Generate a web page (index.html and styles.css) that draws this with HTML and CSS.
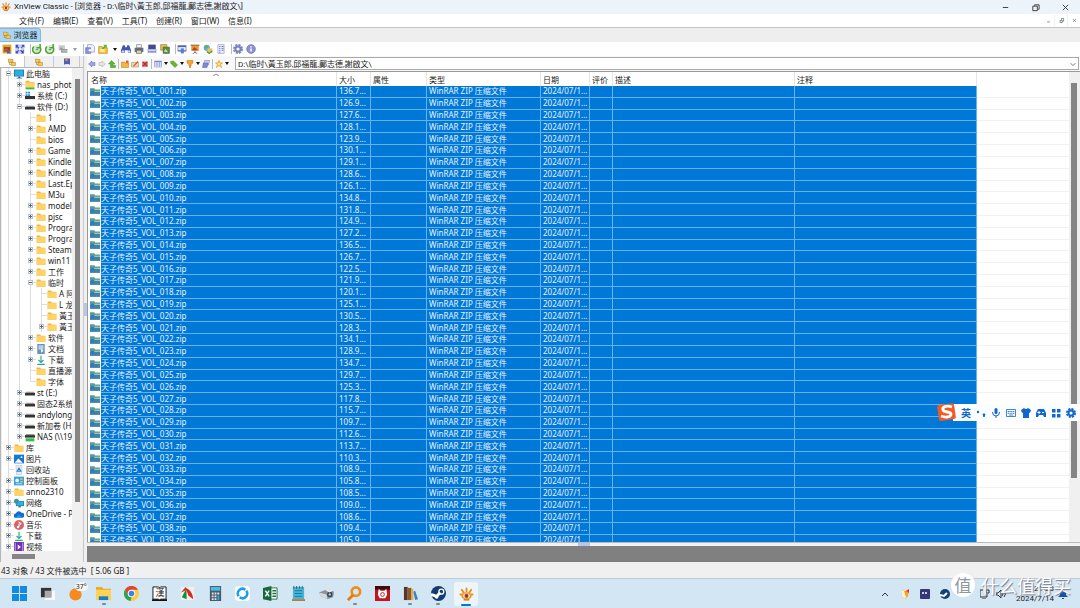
FILE: index.html
```html
<!DOCTYPE html>
<html lang="zh-CN">
<head>
<meta charset="utf-8">
<title>XnView Classic</title>
<link rel="stylesheet" href="styles.css">
</head>
<body>
<svg class="defs" aria-hidden="true">
  <symbol id="eye" viewBox="0 0 16 16"><g stroke="#e8921c" stroke-width="2" stroke-linecap="round"><path d="M3 3l2 3M8 1.500v3M13 3l-2 3M1.500 8h2M14.500 8h-2"/></g><ellipse cx="8" cy="9.500" rx="5.500" ry="4" fill="#f09a28"/><ellipse cx="8" cy="9.500" rx="3.500" ry="2.500" fill="#fff3d8"/><circle cx="8" cy="9.500" r="2.200" fill="#c2341d"/><circle cx="8" cy="9.500" r="1" fill="#3b4f88"/><path d="M5 13.500h6" stroke="#d9871c" stroke-width="2"/></symbol>
  <symbol id="folder" viewBox="0 0 16 16"><path d="M1 2.500h5.500l1.500 2h7v9.500H1z" fill="#efb740"/><path d="M1 5h14v9H1z" fill="#ffd366"/></symbol>
  <symbol id="folderNet" viewBox="0 0 16 16"><path d="M1 1h5.500l1.500 2h7v9H1z" fill="#efb740"/><path d="M1 4h14v8H1z" fill="#ffd366"/><path d="M1 12h14v3H1z" fill="#2fbf4a"/></symbol>
  <symbol id="pc" viewBox="0 0 16 16"><path d="M0 1h16v11H0z" fill="#186a9c"/><path d="M1 2h14v9H1z" fill="#28b0e0"/><path d="M7 12h3v2h3v1H4v-1h3z" fill="#33658a"/></symbol>
  <symbol id="drive" viewBox="0 0 16 16"><path d="M2 6h12l2 2H0z" fill="#999"/><path d="M0 8h16v4H0z" fill="#333"/></symbol>
  <symbol id="driveSys" viewBox="0 0 16 16"><path d="M0 8h16v5H0z" fill="#333"/><path d="M1 1h3v3H1zM5 1h3v3H5zM1 5h3v3H1zM5 5h3v3H5z" fill="#1b8be0"/></symbol>
  <symbol id="driveNet" viewBox="0 0 16 16"><path d="M2 3h12l2 2H0z" fill="#999"/><path d="M0 5h16v4H0z" fill="#333"/><path d="M1 10h14v5H1z" fill="#2fbf4a"/></symbol>
  <symbol id="doc" viewBox="0 0 16 16"><path d="M2 0h12v16H2z" fill="#6f93b5"/><path d="M4 2h8v7H4z" fill="#b8d0e6"/><path d="M8 7l4 4-4 3z" fill="#edf4fa"/></symbol>
  <symbol id="down" viewBox="0 0 16 16"><path d="M8 1v10M4 8l4 4 4-4M2 15h12" fill="none" stroke="#25a98b" stroke-width="1.800"/></symbol>
  <symbol id="image" viewBox="0 0 16 16"><path d="M0 1h16v14H0z" fill="#1678d2"/><path d="M1 14l6-7 7 7z" fill="#fff"/><circle cx="12" cy="5" r="1.500" fill="#fff"/></symbol>
  <symbol id="bin" viewBox="0 0 16 16"><path d="M3 1h10l-1 14H4z" fill="#e7eef5" stroke="#b6c3cf"/><path d="M8 5l3 5H5z" fill="none" stroke="#2080d8" stroke-width="1.800"/></symbol>
  <symbol id="panel" viewBox="0 0 16 16"><path d="M0 1h16v14H0z" fill="#35a4e0"/><circle cx="5" cy="7" r="3" fill="#e9f6ff"/><path d="M10 4h4v2h-4zM10 8h4v2h-4z" fill="#ffcb3d"/><path d="M3 12h10v1H3z" fill="#fff"/></symbol>
  <symbol id="net" viewBox="0 0 16 16"><path d="M3 5h13v8H3z" fill="#157aa9"/><path d="M4 6h11v6H4z" fill="#2eb5dd"/><circle cx="4" cy="5" r="4" fill="#3792ad"/><path d="M7 13h4v2H7z" fill="#3a6172"/></symbol>
  <symbol id="cloud" viewBox="0 0 16 16"><path d="M3 14a3.500 3.500 0 0 1 0-7 5 5 0 0 1 9-1 4 4 0 0 1 1 8z" fill="#0e6fd0"/><path d="M3 14l5-5 5 5z" fill="#2a9bea"/></symbol>
  <symbol id="music" viewBox="0 0 16 16"><circle cx="8" cy="8" r="8" fill="#d9606b"/><path d="M7 3l4 2v2L8 6v5" fill="none" stroke="#fff" stroke-width="1.500"/><circle cx="6.500" cy="11" r="2" fill="#fff"/></symbol>
  <symbol id="video" viewBox="0 0 16 16"><path d="M0 0h16v16H0z" fill="#7130b5"/><path d="M1 1h2v14H1zM13 1h2v14h-2z" fill="#b493dc" /><path d="M6 4l5 4-5 4z" fill="#fff"/></symbol>
  <symbol id="zip" viewBox="0 0 16 16"><path d="M0 2h7l1 2h8v10H0z" fill="#5a9c8d"/><path d="M0 8h16v6H0z" fill="#4382a8"/><path d="M7 6h9v2H7z" fill="#a5c6a0"/><circle cx="4" cy="9" r="3" fill="#287ccc"/></symbol>
  <symbol id="browse" viewBox="0 0 16 16"><path d="M1 1h14v14H1z" fill="#e3a428"/><path d="M3 5h10v7H3z" fill="#7a4c28"/><path d="M3 9l4-3 6 6H3z" fill="#d54b2a"/><path d="M8 9l7 6H8z" fill="#4c5ec5"/></symbol>
  <symbol id="full" viewBox="0 0 16 16"><path d="M1 1h14v14H1z" fill="#c6ccef"/><path d="M1 1h5L4 3l8 8 2-2v6H9l2-2-8-8-2 2zM15 1v5l-2-2-9 9 2 2H1v-5l2 2 9-9-2-2z" fill="#3b48b5"/><path d="M6 6h4v4H6z" fill="#f2f4ff"/></symbol>
  <symbol id="green" viewBox="0 0 16 16"><circle cx="8" cy="8" r="6.500" fill="#d9ecd2"/><path d="M3 4a6.500 6.500 0 1 0 9 0M13 0v6H7" fill="none" stroke="#4ba52e" stroke-width="2.500"/><path d="M6 9h4" stroke="#698" stroke-width="2"/></symbol>
  <symbol id="gray" viewBox="0 0 16 16"><path d="M1 2h10v8H1z" fill="#c9c9c9"/><path d="M2 9l3-4 4 4zM5 8h10v6H5z" fill="#999"/><path d="M7 11h8" stroke="#eee"/></symbol>
  <symbol id="copy" viewBox="0 0 16 16"><path d="M4 1h8l3 3v9H4z" fill="#f2f4ff" stroke="#7a83cf"/><path d="M1 6h8v9H1z" fill="#8b96dd" stroke="#5965b8"/><circle cx="8" cy="10" r="2" fill="#fff"/></symbol>
  <symbol id="open" viewBox="0 0 16 16"><path d="M1 4h6l1 2h7v9H1z" fill="#f2c33e" stroke="#c38d1d"/><path d="M8 1h6v6l-2-2-4 4-2-2 4-4z" fill="#5fb23b"/><path d="M3 8h8v5H3z" fill="#ffe58c"/></symbol>
  <symbol id="find" viewBox="0 0 16 16"><path d="M3 2h3l1 3h2l1-3h3l3 8v4h-5v-4H6v4H0v-4z" fill="#4356ab"/><circle cx="3" cy="12" r="2" fill="#c8d4ff"/><circle cx="13" cy="12" r="2" fill="#c8d4ff"/></symbol>
  <symbol id="print" viewBox="0 0 16 16"><path d="M4 1h8v5H4z" fill="#f4f4f4" stroke="#777"/><path d="M1 6h14v7H1z" fill="#686d86"/><path d="M4 10h8v5H4z" fill="#e8d5a5" stroke="#555"/></symbol>
  <symbol id="scan" viewBox="0 0 16 16"><path d="M2 1h12v7H2z" fill="#404a8e"/><path d="M1 8h14v6H1z" fill="#8c98ca"/><path d="M2 9h12v2H2z" fill="#dce3ff"/></symbol>
  <symbol id="pics" viewBox="0 0 16 16"><path d="M1 1h10v9H1z" fill="#e8c34e" stroke="#957b24"/><path d="M5 5h10v10H5z" fill="#518f4c" stroke="#445a4a"/><path d="M6 12l3-4 4 5z" fill="#e6df8e"/></symbol>
  <symbol id="screen" viewBox="0 0 16 16"><path d="M1 2h14v10H1z" fill="#5662ad"/><path d="M2 5h12v5H2z" fill="#e8ecff"/><path d="M6 7h5v8H6z" fill="#5380cf"/></symbol>
  <symbol id="slide" viewBox="0 0 16 16"><path d="M1 1h14v2H1z" fill="#8f6b3d"/><path d="M2 3h12v8H2z" fill="#ef932c"/><path d="M3 10l4-5 6 5z" fill="#b93c27"/><path d="M8 11v2l-4 3m4-3l4 3" stroke="#65738b" stroke-width="1.500" fill="none"/></symbol>
  <symbol id="web" viewBox="0 0 16 16"><circle cx="6" cy="6" r="5" fill="#68a9d6"/><path d="M3 3l4-1 1 3-4 3z" fill="#60b44d"/><path d="M7 7h8v7H7z" fill="#e6c750"/><path d="M6 12l4 3 5-4" stroke="#558d40" stroke-width="2" fill="none"/></symbol>
  <symbol id="sheet" viewBox="0 0 16 16"><path d="M3 1h10v14H3z" fill="#f2f4ff" stroke="#8a91c9"/><path d="M5 4h2M9 4h3M5 7h2M9 7h3M5 10h2M9 10h3M5 13h2" stroke="#5d67b4" stroke-width="1.500"/></symbol>
  <symbol id="gear" viewBox="0 0 16 16"><circle cx="8" cy="8" r="6" fill="none" stroke="currentColor" stroke-width="4" stroke-dasharray="3.100 1.600"/><circle cx="8" cy="8" r="4" fill="none" stroke="currentColor" stroke-width="3"/></symbol>
  <symbol id="info" viewBox="0 0 16 16"><circle cx="8" cy="8" r="7" fill="#8d91d8" stroke="#6067b8"/><path d="M8 7v5M8 3.500v2" stroke="#fff" stroke-width="2.500"/></symbol>
  <symbol id="left" viewBox="0 0 16 16"><path d="M1 8l7-6v3h6v6H8v3z" fill="#9aa2e6" stroke="#6069bd"/></symbol>
  <symbol id="right" viewBox="0 0 16 16"><path d="M15 8L8 2v3H2v6h6v3z" fill="#e4e4e4" stroke="#aaa"/></symbol>
  <symbol id="up" viewBox="0 0 16 16"><path d="M7 1l7 7h-4v3h5v4H5V8H1z" fill="#63b52f" stroke="#378c20"/></symbol>
  <symbol id="newf" viewBox="0 0 16 16"><path d="M1 4h6l1 2h7v9H1z" fill="#f2b73e" stroke="#bd6d2a"/><path d="M10 1h5v5h-5z" fill="#e65b2e"/></symbol>
  <symbol id="edit" viewBox="0 0 16 16"><path d="M1 5h14v9H1z" fill="#e7d5ad" stroke="#a57c54"/><path d="M4 12l9-10 2 2-9 9z" fill="#d55c2e"/></symbol>
  <symbol id="del" viewBox="0 0 16 16"><path d="M2 3h12v11H2z" fill="#e08886"/><path d="M4 4l8 8M12 4l-8 8" stroke="#b52a32" stroke-width="3"/></symbol>
  <symbol id="grid" viewBox="0 0 16 16"><path d="M1 2h14v12H1zM1 6h14M1 10h14M6 2v12M11 2v12" fill="#f2f4ff" stroke="#7b83c2"/><path d="M1 2h14v2H1z" fill="#7b83c2"/></symbol>
  <symbol id="tag" viewBox="0 0 16 16"><path d="M1 3l6-1 8 8-5 5-8-8z" fill="#6bb52e" stroke="#438b1f"/></symbol>
  <symbol id="filter" viewBox="0 0 16 16"><path d="M2 1h12v5l-4 3v3H6V9L2 6z" fill="#f1a728" stroke="#bc7719"/><circle cx="8" cy="14" r="2" fill="#db7a20"/></symbol>
  <symbol id="stack" viewBox="0 0 16 16"><path d="M5 1h10l-2 9H3z" fill="#c9cff2" stroke="#666fae"/><path d="M3 6h9l-2 9H1z" fill="#7e89d1" stroke="#545eab"/></symbol>
  <symbol id="star" viewBox="0 0 16 16"><path d="M8 1l2 5h5l-4 3 2 6-5-4-5 4 2-6-4-3h5z" fill="#ffe179" stroke="#dc9a26" stroke-width="1.500"/></symbol>
  <symbol id="folders" viewBox="0 0 16 16"><path d="M1 2h4l1 1h4v6H1zM6 8h4l1 1h4v6H6z" fill="#f8c64a" stroke="#b77b23"/><path d="M3 9v4h3" stroke="#8a6420" fill="none"/></symbol>
  <symbol id="book" viewBox="0 0 16 16"><path d="M2 1h12v13H2z" fill="#505eb5"/><path d="M5 1h4v6L7 5 5 7z" fill="#ef9341"/><path d="M3 12h10v2H3z" fill="#d8dcff"/></symbol>
</svg>

<header class="titlebar">
  <svg class="i10"><use href="#eye"/></svg>
  <h1>XnView Classic - [浏览器 - D:\临时\黃玉郎,邱福龍,鄺志德,謝啟文\]</h1>
  <div class="winbtns">
    <button aria-label="最小化"><svg viewBox="0 0 10 10"><path d="M2 5h6"/></svg></button>
    <button aria-label="还原"><svg viewBox="0 0 10 10"><path d="M2 3.500h5v5H2zM4 3V2h5v5H8"/></svg></button>
    <button aria-label="关闭"><svg viewBox="0 0 10 10"><path d="M2 2l6 6M8 2L2 8"/></svg></button>
  </div>
</header>
<nav class="menubar">
  <button>文件(F)</button><button>编辑(E)</button><button>查看(V)</button><button>工具(T)</button><button>创建(R)</button><button>窗口(W)</button><button>信息(I)</button>
  <div class="docbtns">
    <button aria-label="最小化文档"><svg viewBox="0 0 10 10"><path d="M3 7h4"/></svg></button>
    <button aria-label="还原文档"><svg viewBox="0 0 10 10"><path d="M3 5h3v3H3zM5 4V2h3v4H6"/></svg></button>
    <button aria-label="关闭文档"><svg viewBox="0 0 10 10"><path d="M3 3l4 4M7 3L3 7"/></svg></button>
  </div>
</nav>
<div class="tabbar"><button class="tab"><svg class="i8"><use href="#folders"/></svg>浏览器</button></div>
<div class="toolbar" id="toolbar"></div>

<main class="workspace">
  <aside class="side">
    <div class="side-tabs">
      <button class="on" aria-label="文件夹"><svg class="i8"><use href="#folders"/></svg></button>
      <button aria-label="收藏夹"><svg class="i8"><use href="#folders"/></svg></button>
      <button aria-label="类别"><svg class="i8"><use href="#book"/></svg></button>
    </div>
    <div class="tree-box">
      <ul class="tree" id="folderTree"></ul>
      <div class="vbar"><i></i></div>
      <div class="hbar"><i></i></div>
    </div>
  </aside>
  <div class="splitter"><i></i></div>
  <section class="content">
    <div class="address">
      <div class="addr-tools" id="addrTools"></div>
      <input aria-label="地址" value="D:\临时\黃玉郎,邱福龍,鄺志德,謝啟文\">
      <button class="drop" aria-label="历史记录"><svg viewBox="0 0 10 10"><path d="M2 4l3 3 3-3"/></svg></button>
    </div>
    <div class="list">
      <div class="list-view">
        <table>
          <colgroup><col class="c-icon"><col class="c-name"><col class="c-size"><col class="c-attr"><col class="c-type"><col class="c-date"><col class="c-rate"><col class="c-desc"><col class="c-note"><col></colgroup>
          <thead><tr><th colspan="2"><svg class="sort" viewBox="0 0 6 3"><path d="M0 3l3-2 3 2" fill="none" stroke="#888"/></svg>名称</th><th>大小</th><th>属性</th><th>类型</th><th>日期</th><th>评价</th><th>描述</th><th>注释</th><th></th></tr></thead>
          <tbody id="rows"></tbody>
        </table>
      </div>
      <div class="list-bar"><i></i></div>
    </div>
    <div class="hsplit"><i></i></div>
    <div class="preview"></div>
  </section>
</main>
<footer class="status">43 对象 / 43 文件被选中&nbsp; [ 5.06 GB ]</footer>

<div class="taskbar">
  <div class="apps">
    <button aria-label="开始"><svg viewBox="0 0 16 16"><path d="M0 0h7.500v7.500H0zM8.500 0H16v7.500H8.500zM0 8.500h7.500V16H0zM8.500 8.500H16V16H8.500z" fill="#138be0"/></svg></button>
    <button aria-label="任务视图"><svg viewBox="0 0 16 16"><path d="M5 5h11v10H5z" fill="#f8f8f8"/><path d="M1 2h11v10H1z" fill="#333"/><path d="M5 5h7v7H5z" fill="#aaa"/></svg></button>
    <button class="weather" aria-label="天气"><svg viewBox="0 0 16 16"><circle cx="8" cy="9" r="6.500" fill="#f58a1f"/></svg><span>37°</span></button>
    <button class="run" aria-label="资源管理器"><svg viewBox="0 0 16 16"><path d="M0 1h6l2 2h8v12H0z" fill="#e9ab2c"/><path d="M0 4h16v11H0z" fill="#ffd254"/><path d="M3 11h10v4H3z" fill="#167fc6"/></svg></button>
    <button aria-label="Chrome"><svg viewBox="0 0 16 16"><circle cx="8" cy="8" r="8" fill="#ffce3d"/><path d="M1 4a8 8 0 0 1 14 0H8L4.500 10z" fill="#e24334"/><path d="M1 4l4 6 3 2-1 4A8 8 0 0 1 1 4z" fill="#2ea350"/><circle cx="8" cy="8" r="4" fill="#fff"/><circle cx="8" cy="8" r="3" fill="#3f7fe8"/></svg></button>
    <button class="cn" aria-label="汉字工具"><svg viewBox="0 0 16 16"><path d="M1 1h6l1 1 1-1h6v13H9l-1 1-1-1H1z" fill="#fff" stroke="#111"/><path d="M0 14h7l1 1 1-1h7v2H0z" fill="#111"/></svg><span>漢</span></button>
    <button aria-label="图像工具"><svg viewBox="0 0 16 16"><path d="M1 1h14v14H1z" fill="#eef1ee"/><path d="M2 12L7 2v12z" fill="#168d39"/><path d="M6 2c4 1 8 6 8 12L9 10z" fill="#dc2820"/><path d="M1 7l5-6 2 3z" fill="#c63d29"/></svg></button>
    <button aria-label="计算器"><svg viewBox="0 0 16 16"><path d="M2 0h12v16H2z" fill="#4d5966"/><path d="M3 1h10v4H3z" fill="#42bee7"/><path d="M4 7h2v2H4zM7 7h2v2H7zM10 7h2v2h-2zM4 10h2v2H4zM7 10h2v2H7zM4 13h2v2H4zM7 13h2v2H7z" fill="#dfe7ed"/><path d="M10 10h2v5h-2z" fill="#2aa5df"/></svg></button>
    <button aria-label="同步"><svg viewBox="0 0 16 16"><rect width="16" height="16" rx="4" fill="#fff"/><path d="M4 11a5 5 0 0 1 7-7M12 5a5 5 0 0 1-7 7" fill="none" stroke="#189eea" stroke-width="2.600"/></svg></button>
    <button aria-label="Excel"><svg viewBox="0 0 16 16"><path d="M8 2h7v12H8z" fill="#f7fff9" stroke="#217346"/><path d="M10 5h4M10 8h4M10 11h4" stroke="#217346" stroke-width="1.500"/><path d="M0 2l9-2v16l-9-2z" fill="#18683d"/><path d="M2.500 5l4 6M6.500 5l-4 6" stroke="#fff" stroke-width="1.500"/></svg></button>
    <button aria-label="记事本"><svg viewBox="0 0 16 16"><path d="M2 1h12v13H2z" fill="#44b6d9"/><path d="M4 5h8M4 8h8M4 11h8" stroke="#177a9b"/><path d="M3 0v3M6 0v3M9 0v3M12 0v3" stroke="#555"/><path d="M1 14h14v2H1z" fill="#b97a38"/></svg></button>
    <button aria-label="相机"><svg viewBox="0 0 16 16"><path d="M0 7l10-4 6 3-1 6-6 2-7-3z" fill="#8d949b"/><path d="M0 7l8 2 1 5-7-3z" fill="#d6dade"/><circle cx="11.500" cy="9" r="2.800" fill="#31404f"/><circle cx="11.500" cy="9" r="1.300" fill="#b9c6d2"/><path d="M6 4l4-1 5 2-4 2z" fill="#e6eaee"/></svg></button>
    <button class="run" aria-label="搜索"><svg viewBox="0 0 16 16"><circle cx="9.500" cy="6" r="4.500" fill="none" stroke="#f28a18" stroke-width="2.800"/><path d="M6.500 9.500L1 15" stroke="#e47b10" stroke-width="3"/></svg></button>
    <button aria-label="小猪"><svg viewBox="0 0 16 16"><path d="M0 0h16v16H0z" fill="#c41420"/><path d="M0 0h16v4H0z" fill="#44080c"/><path d="M4 3l2 2h4l2-2 1 6-2 4H5L3 9z" fill="#fff"/><circle cx="8" cy="9" r="2" fill="none" stroke="#b81924"/></svg></button>
    <button class="run" aria-label="书架"><svg viewBox="0 0 16 16"><path d="M1 1h4v14H1z" fill="#5a3526"/><path d="M5 2h4v13H5z" fill="#8e5a30"/><path d="M9 3h2v12H9z" fill="#e4af3a"/><path d="M11 6l2-1 3 9-3 1z" fill="#3f7bd1"/></svg></button>
    <button class="run" aria-label="Steam"><svg viewBox="0 0 16 16"><circle cx="8" cy="8" r="8" fill="#123b73"/><path d="M0 9l6 2 4-4" stroke="#fff" stroke-width="3" fill="none"/><circle cx="11" cy="6" r="2.600" fill="none" stroke="#fff" stroke-width="1.400"/><circle cx="6" cy="11.500" r="2" fill="#fff"/></svg></button>
    <button class="run active" aria-label="XnView"><svg><use href="#eye"/></svg></button>
  </div>
  <div class="tray">
    <button aria-label="显示隐藏图标"><svg viewBox="0 0 10 10"><path d="M2 7l3-3 3 3" fill="none" stroke="#333"/></svg></button>
    <button aria-label="安全"><svg viewBox="0 0 10 10"><path d="M1 1l4 1 4-1-1 6-3 3-3-3z" fill="#f6a51d"/><path d="M1 1l3 1 2 6-1 2-3-3z" fill="#fff3dd"/><path d="M6 2l3-2v4z" fill="#e53824"/></svg></button>
    <button aria-label="工具"><svg viewBox="0 0 10 10"><rect width="10" height="10" rx="1" fill="#343878"/><path d="M3 3v2M6 3v2" stroke="#fff" stroke-width="1.500"/></svg></button>
    <button aria-label="Steam 状态"><svg viewBox="0 0 10 10"><circle cx="5" cy="5" r="5" fill="#164273"/><path d="M0 6l4 1 3-3" stroke="#fff" stroke-width="2" fill="none"/></svg></button>
    <button class="t-net" aria-label="网络"><svg viewBox="0 0 10 10"><path d="M3 1H0v7h7V5M2 10h4M6 1h3v3H6z" fill="none" stroke="#333"/></svg></button>
    <button aria-label="音量"><svg viewBox="0 0 10 10"><path d="M0 4h2l3-3v8L2 6H0zM6 3q2 2 0 4M8 2q3 3 0 6" fill="none" stroke="#333"/></svg></button>
    <time>21:33<br>2024/7/14</time>
    <button aria-label="通知"><svg viewBox="0 0 10 10"><path d="M0 8l2-2V4a3 3 0 0 1 6 0v2l2 2zM4 9h2v1H4z" fill="#1353a7"/></svg></button>
  </div>
</div>

<div class="ime">
  <svg class="sogou" viewBox="0 0 20 20"><rect x="1" y="2" width="17" height="16" rx="2" fill="#f15a24" transform="rotate(-8 10 10)"/><path d="M15 5C9 3 5 5 6 8s8 1 8 4-5 4-10 2" fill="none" stroke="#fff" stroke-width="2.800"/></svg>
  <button>英</button>
  <button aria-label="标点"><svg viewBox="0 0 10 10"><circle cx="2" cy="4" r="1.200" fill="currentColor"/><path d="M7 6h2l-1 3z" fill="currentColor" stroke="currentColor"/></svg></button>
  <button aria-label="语音"><svg viewBox="0 0 10 10"><rect x="3.500" y="0" width="3" height="6" rx="1.500" fill="currentColor"/><path d="M1.500 4q0 4 3.500 4t3.500-4M5 8v2" fill="none" stroke="currentColor"/></svg></button>
  <button aria-label="软键盘"><svg viewBox="0 0 20 20"><path d="M1 3h18v14H1z" fill="none" stroke="currentColor" stroke-width="1.600"/><path d="M3.500 7h13M3.500 10.500h13" stroke="currentColor" stroke-width="2" stroke-dasharray="2.200 1.400"/><path d="M6 14h8" stroke="currentColor" stroke-width="1.600"/></svg></button>
  <button aria-label="皮肤"><svg viewBox="0 0 10 10"><path d="M0 2l3-2q2 2 4 0l3 2-1 3-1-.5V10H2V4.500L1 5z" fill="currentColor"/></svg></button>
  <button aria-label="游戏"><svg viewBox="0 0 10 10"><path d="M2 1h6l2 4v4H8L7 7H3L2 9H0V5z" fill="currentColor"/><path d="M3 3v3M1.500 4.500h3M6 4.500h2" stroke="#fff"/></svg></button>
  <button aria-label="工具箱"><svg viewBox="0 0 10 10"><path d="M1 1h3.500v3.500H1zM6 1h3.500v3.500H6zM1 6h3.500v3.500H1zM6 6h3.500v3.500H6z" fill="currentColor"/></svg></button>
  <button aria-label="设置"><svg><use href="#gear"/></svg></button>
</div>
<div class="watermark"><b>值</b><span>什么值得买</span></div>
<script src="script.js"></script>
</body>
</html>
```
FILE: styles.css
```css
* { box-sizing: border-box; }
body {
  margin: 0; height: 100vh; overflow: hidden; display: flex; flex-direction: column;
  background: #f0f0f0; color: #1a1a1a;
  font: 8px/10px "Noto Sans", "Noto Sans CJK SC", sans-serif;
}
button, input { font: inherit; color: inherit; border: 0; padding: 0; margin: 0; background: none; }
button { display: flex; align-items: center; justify-content: center; }
svg { display: block; flex: none; }
.defs { position: absolute; width: 0; height: 0; }
.i10 { width: 10px; height: 10px; }
.i8 { width: 8px; height: 8px; }

.titlebar { flex: none; height: 14px; display: flex; align-items: center; gap: 3px; padding-left: 1px; background: #edf3fb; }
.titlebar h1 { margin: 0; flex: 1; font: 400 8px/10px Roboto, "Noto Sans CJK SC", sans-serif; white-space: nowrap; }
.winbtns { display: flex; }
.winbtns button { width: 30px; height: 14px; }
.winbtns svg, .docbtns svg { width: 9px; height: 9px; fill: none; stroke: #333; }
.menubar { flex: none; height: 13px; display: flex; align-items: center; gap: 9px; padding-left: 19px; background: #fff; }
.docbtns { margin-left: auto; display: flex; gap: 1px; background: #f0f0f0; }
.docbtns button { width: 12px; height: 11px; background: #fff; }
.docbtns svg { width: 7px; height: 7px; stroke: #567; }
.tabbar { flex: none; height: 15px; display: flex; align-items: flex-end; background: #eee; border-top: 1px solid #c4c4c4; }
.tab { height: 14px; width: 41px; gap: 3px; background: #a9d5f2; border: 1px solid #87b9da; border-left: 0; border-radius: 0 3px 0 0; }

.toolbar { flex: none; height: 14px; display: flex; align-items: center; gap: 3px; padding-left: 2px; background: #fff; }
.toolbar svg { width: 10px; height: 10px; }
.sep { width: 1px; height: 10px; background: #bbb; }
.toolbar .sep { margin: 0 -2px 0 2px; }
.caret { border: 2px solid transparent; border-top: 3px solid #111; border-bottom: 0; }
.toolbar .caret { margin: 0 1px 0 2px; }
.caret.dim { border-top-color: #999; }
.purple { color: #7b80bf; }

.workspace { flex: 1; min-height: 0; display: flex; }
.side { width: 84px; flex: none; display: flex; flex-direction: column; border-right: 1px solid #c8c8c8; }
.side-tabs { flex: none; height: 12px; display: grid; grid-template-columns: 25px 29px 26px; border-bottom: 1px solid #b5b5b5; }
.side-tabs button { border-right: 1px solid #c8c8c8; }
.side-tabs .on { background: #fff; }
.tree-box { flex: 1; min-height: 0; display: grid; grid-template: minmax(0, 1fr) 11px / minmax(0, 1fr) 11px; border-left: 1px solid #b5b5b5; padding-left: 1px; }
.tree { margin: 0; padding: 0 0 0 1px; overflow: hidden; list-style: none; background: #fff; }
.tree li { display: flex; align-items: center; height: 11px; white-space: nowrap; }
.tree li > svg { width: 10px; height: 10px; margin-right: 2px; }
.guide { flex: none; width: 11px; height: 11px; background: linear-gradient(#ddd, #ddd) 5px 0 / 1px 11px no-repeat; }
.node { flex: none; display: flex; align-items: center; justify-content: center; width: 11px; height: 11px; background: linear-gradient(#ddd, #ddd) 5px 0 / 1px 11px no-repeat, linear-gradient(#ddd, #ddd) 5px 5px / 6px 1px no-repeat; }
.node.end { background-size: 1px 6px, 6px 1px; }
.node button { width: 5px; height: 5px; border: 1px solid #b9c1cb; background: linear-gradient(#567, #567) 50% 50% / 3px 1px no-repeat, #fff; }
.node button.plus { background: linear-gradient(#567, #567) 50% 50% / 3px 1px no-repeat, linear-gradient(#567, #567) 50% 50% / 1px 3px no-repeat, #fff; }
.vbar { display: flex; padding: 11px 3px 49px 3px; background: #f0f0f0; }
.vbar i { flex: 1; background: #858585; }
.hbar { grid-column: 1 / 3; padding: 3px 10px; background: #f0f0f0; }
.hbar i { display: block; width: 23px; height: 5px; background: #858585; }
.splitter { width: 3px; flex: none; display: flex; align-items: center; background: #f0f0f0; }
.splitter i { width: 3px; height: 13px; background: #b9c7e6; }

.content { flex: 1; min-width: 0; display: flex; flex-direction: column; }
.address { flex: none; height: 16px; display: flex; align-items: center; background: #f8f8f8; border-bottom: 1px solid #999; padding: 1px 0; }
.addr-tools { width: 148px; height: 14px; flex: none; display: flex; align-items: center; gap: 2px; padding-left: 1px; }
.addr-tools svg { width: 8px; height: 8px; }
.address input { flex: 1; min-width: 0; height: 13px; padding: 0 2px; background: #fff; border: 1px solid #aaa; border-right: 0; font-family: Roboto, "Noto Sans CJK SC", sans-serif; }
.drop { width: 12px; height: 13px; margin-right: 1px; background: #fff; border: 1px solid #aaa; border-left: 0; }
.drop svg { width: 8px; height: 8px; fill: none; stroke: #555; }

.list { flex: 1; min-height: 0; display: flex; border-left: 1px solid #999; background: #fff; }
.list-view { flex: 1; min-width: 0; overflow: hidden; padding-left: 2px; }
table { width: 100%; height: 475px; table-layout: fixed; border-collapse: separate; border-spacing: 0; }
.c-icon { width: 11px; } .c-name { width: 236px; } .c-size { width: 34px; } .c-attr { width: 56px; } .c-type { width: 114px; }
.c-date { width: 49px; } .c-rate { width: 23px; } .c-desc { width: 182px; } .c-note { width: 182px; }
th { height: 14px; padding: 1px 0 0 2px; text-align: left; font-weight: 400; border-right: 1px solid #e5e5e5; white-space: nowrap; }
th:first-child { position: relative; padding-left: 1px; }
th:last-child { border-right: 0; }
.sort { position: absolute; left: 50%; top: 1px; width: 6px; height: 3px; }
td { padding: 0 0 0 2px; line-height: 10px; color: #e6f3ff; background: #0078d7; border-right: 1px solid #69b1eb; border-bottom: 1px solid #69b1eb; overflow: hidden; white-space: nowrap; }
td:first-child { padding: 0; background: #fff; border: 0; }
td:first-child svg { width: 10px; height: 10px; }
td:nth-child(2) { padding-left: 0; }
td:last-child { background: #fff; border-right: 0; border-bottom-color: #f1f1f1; }
.list-bar { width: 11px; flex: none; display: flex; padding: 11px 3px 64px 2px; background: #f0f0f0; }
.list-bar i { flex: 1; background: #858585; }
.hsplit { flex: none; height: 4px; display: flex; justify-content: center; background: #f0f0f0; border-top: 1px solid #bbb; }
.hsplit i { width: 12px; background: #b9c7e6; }
.preview { flex: none; height: 16px; background: #808080; }
.status { flex: none; height: 16px; padding: 4px 1px 2px; background: #f0f0f0; white-space: nowrap; }

.taskbar { flex: none; height: 30px; display: flex; justify-content: space-between; padding: 0 12px 0 6px; background: #d3e6f4; border-top: 1px solid #bccbd8; }
.apps { display: grid; grid-template-columns: repeat(17, 1fr); width: 474px; }
.apps button { position: relative; height: 29px; }
.apps svg { width: 15px; height: 15px; }
.run::after { content: ""; position: absolute; left: 12px; bottom: 3px; width: 4px; height: 2px; border-radius: 1px; background: #7d8790; }
.apps .active { height: 24px; margin: 3px 2px; border-radius: 3px; background: #edf5fb; }
.active::after { left: 7px; bottom: 0; width: 10px; background: #0078d4; }
.weather span { position: absolute; left: 13px; top: 3px; padding: 0 1px; border-radius: 5px; background: #f5f5f5; font-size: 7px; line-height: 9px; }
.cn span { position: absolute; left: 10px; top: 8px; font-size: 9px; line-height: 11px; }
.tray { display: flex; align-items: center; gap: 10px; }
.tray svg { width: 10px; height: 10px; }
.tray .t-net { margin-left: 20px; }
.tray .t-net + button { margin-left: -4px; }
.tray time { margin-right: -6px; text-align: right; font-family: Roboto, sans-serif; }

.ime { position: absolute; right: 0; top: 404px; height: 17px; width: 141px; display: flex; align-items: center; gap: 5px; padding-left: 22px; color: #1167cf; background: linear-gradient(90deg, transparent 14px, #fbfdff 14px); }
.ime button { width: 10px; height: 10px; font-size: 10px; font-weight: 700; flex: none; }
.ime button svg { width: 10px; height: 10px; }
.sogou { position: absolute; left: -2px; top: -2px; width: 20px; height: 20px; }
.watermark { position: absolute; right: 9px; bottom: 10px; display: flex; align-items: center; gap: 6px; color: #fff; font: 18px/26px "Noto Sans CJK SC", sans-serif; text-shadow: 1px 1px 1px #778; }
.watermark b { width: 24px; height: 24px; border-radius: 50%; background: #fff; color: #8d979f; font-size: 17px; font-weight: 400; line-height: 23px; text-align: center; text-shadow: none; }
```
FILE: script.js
```js
const icon = (id, cls = "") => `<svg class="${cls}"><use href="#${id}"/></svg>`;

function tools(target, spec) {
  document.getElementById(target).innerHTML = spec.split(" ").map((t) => {
    if (t === "|") return '<span class="sep"></span>';
    if (t === "v") return '<span class="caret"></span>';
    if (t === "d") return '<span class="caret dim"></span>';
    return `<button aria-label="${t}">${icon(t, t === "gear" ? "purple" : "")}</button>`;
  }).join("");
}
tools("toolbar", "browse full | green green gray d | copy open v find print scan pics | screen slide web sheet | gear info");
tools("addrTools", "left right up | newf edit del | grid v tag v filter v stack | star v");

// level, icon, label, expander (+ closed, - open, . none, e last without expander)
const nodes = [
  [0, "pc", "此电脑", "-"], [1, "folderNet", "nas_photo", "+"], [1, "driveSys", "系统 (C:)", "+"], [1, "drive", "软件 (D:)", "-"],
  [2, "folder", "1", "."], [2, "folder", "AMD", "+"], [2, "folder", "bios", "."], [2, "folder", "Game", "+"],
  [2, "folder", "Kindle", "+"], [2, "folder", "Kindle", "+"], [2, "folder", "Last.Ep", "+"], [2, "folder", "M3u", "."],
  [2, "folder", "model", "+"], [2, "folder", "pjsc", "+"], [2, "folder", "Progra", "+"], [2, "folder", "Progra", "+"],
  [2, "folder", "Steam", "+"], [2, "folder", "win11", "+"], [2, "folder", "工作", "+"], [2, "folder", "临时", "-"],
  [3, "folder", "A 阿", "."], [3, "folder", "L 龙", "."], [3, "folder", "黃玉", "."], [3, "folder", "黃玉", "+"],
  [2, "folder", "软件", "+"], [2, "doc", "文档", "+"], [2, "down", "下载", "+"], [2, "folder", "直播源", "."], [2, "folder", "字体", "e"],
  [1, "drive", "st (E:)", "+"], [1, "drive", "固态2系统", "+"], [1, "drive", "andylong", "+"], [1, "drive", "新加卷 (H:", "+"], [1, "driveNet", "NAS (\\\\19", "+"],
  [0, "folder", "库", "+"], [0, "image", "图片", "+"], [0, "bin", "回收站", "."], [0, "panel", "控制面板", "+"], [0, "folder", "anno2310", "+"],
  [0, "net", "网络", "+"], [0, "cloud", "OneDrive - P", "+"], [0, "music", "音乐", "+"], [0, "down", "下载", "+"], [0, "video", "视频", "+"],
];
document.getElementById("folderTree").innerHTML = nodes.map(([level, id, label, exp]) => {
  const box = exp === "+" ? '<button class="plus" aria-label="展开"></button>' : exp === "-" ? '<button aria-label="折叠"></button>' : "";
  return `<li>${'<span class="guide"></span>'.repeat(level)}<span class="node${exp === "e" ? " end" : ""}">${box}</span>${icon(id)}<span>${label}</span></li>`;
}).join("");

const sizes = "136.7 126.9 127.6 128.1 123.9 130.1 129.1 128.6 126.1 134.8 131.8 124.9 127.2 136.5 126.7 122.5 121.9 120.1 125.1 130.5 128.3 134.1 128.9 134.7 129.7 125.3 117.8 115.7 109.7 112.6 113.7 110.3 108.9 105.8 108.5 109.0 108.6 109.4 105.9".split(" ");
document.getElementById("rows").innerHTML = sizes.map((size, i) =>
  `<tr><td>${icon("zip")}</td><td>天子传奇5_VOL_${String(i + 1).padStart(3, "0")}.zip</td><td>${size}...</td><td></td><td>WinRAR ZIP 压缩文件</td><td>2024/07/1...</td><td></td><td></td><td></td><td></td></tr>`
).join("");
```
